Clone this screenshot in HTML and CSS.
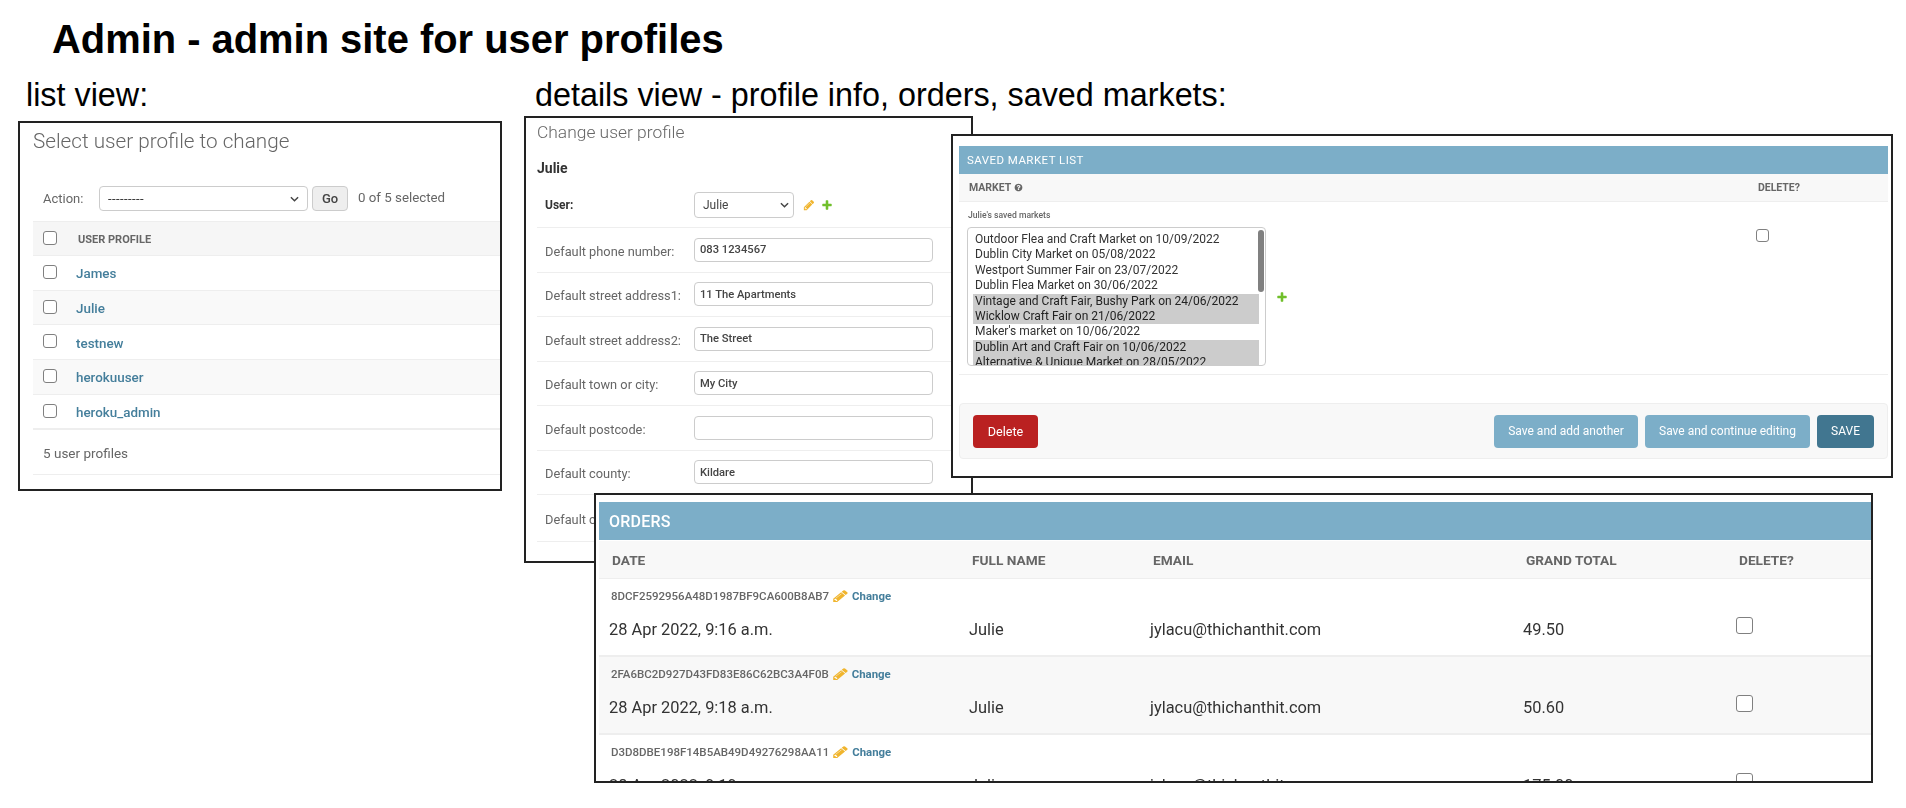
FILE: index.html
```html
<!DOCTYPE html>
<html lang="en">
<head>
    <meta charset="UTF-8">
    <title>Admin - admin site for user profiles</title>
    <link rel="stylesheet" href="styles.css">
</head>

<body>
    <svg class="icon-defs" width="0" height="0">
        <symbol id="pencil" viewBox="0 0 1792 1792" preserveAspectRatio="none"><path d="M491 1536l91-91-235-235-91 91v107h128v128h107zm523-928q0-22-22-22-10 0-17 7l-542 542q-7 7-7 17 0 22 22 22 10 0 17-7l542-542q7-7 7-17zm-54-192l416 416-832 832h-416v-416zm683 96q0 53-37 90l-166 166-416-416 166-165q36-38 90-38 53 0 91 38l235 234q37 39 37 91z"/></symbol>
        <symbol id="plus" viewBox="0 0 1792 1792"><path d="M1600 796v192q0 40-28 68t-68 28h-416v416q0 40-28 68t-68 28h-192q-40 0-68-28t-28-68v-416h-416q-40 0-68-28t-28-68v-192q0-40 28-68t68-28h416v-416q0-40 28-68t68-28h192q40 0 68 28t28 68v416h416q40 0 68 28t28 68z"/></symbol>
        <symbol id="help" viewBox="0 0 1792 1792"><path d="M1024 1376v-192q0-14-9-23t-23-9h-192q-14 0-23 9t-9 23v192q0 14 9 23t23 9h192q14 0 23-9t9-23zm256-672q0-88-55.5-163t-138.5-116-170-41q-243 0-371 213-15 24 8 42l132 100q7 6 19 6 16 0 25-12 53-68 86-92 34-24 86-24 48 0 85.5 26t37.5 59q0 38-20 61t-68 45q-63 28-115.5 86.5t-52.5 125.5v36q0 14 9 23t23 9h192q14 0 23-9t9-23q0-19 21.5-49.5t54.5-49.5q32-18 49-28.5t46-35 44.5-48 28-60.5 12.5-81zm384 192q0 209-103 385.5t-279.5 279.5-385.5 103-385.5-103-279.5-279.5-103-385.5 103-385.5 279.5-279.5 385.5-103 385.5 103 279.5 279.5 103 385.5z"/></symbol>
        <symbol id="chevron" viewBox="0 0 10 6"><path d="M1 1l4 4 4-4" fill="none" stroke="#444" stroke-width="1.6"/></symbol>
    </svg>

    <h1 class="page-title">Admin - admin site for user profiles</h1>
    <p class="caption caption-list">list view:</p>
    <p class="caption caption-details">details view - profile info, orders, saved markets:</p>

    <!-- List view -->
    <section class="shot shot-list">
        <h2 class="list-title">Select user profile to change</h2>
        <div class="actions">
            <label class="actions-label">Action:</label>
            <div class="fake-select action-select">---------<svg class="chevron"><use href="#chevron"/></svg></div>
            <button class="go-button" type="button">Go</button>
            <span class="actions-count">0 of 5 selected</span>
        </div>
        <div class="list-row list-head"><input class="check" type="checkbox"><span class="list-head-text">USER PROFILE</span></div>
        <div class="list-row"><input class="check" type="checkbox"><a class="list-link">James</a></div>
        <div class="list-row list-row-alt"><input class="check" type="checkbox"><a class="list-link">Julie</a></div>
        <div class="list-row"><input class="check" type="checkbox"><a class="list-link">testnew</a></div>
        <div class="list-row list-row-alt"><input class="check" type="checkbox"><a class="list-link">herokuuser</a></div>
        <div class="list-row list-row-last"><input class="check" type="checkbox"><a class="list-link">heroku_admin</a></div>
        <p class="list-count">5 user profiles</p>
    </section>

    <!-- Details view: profile form -->
    <section class="shot shot-form">
        <h2 class="form-title">Change user profile</h2>
        <h3 class="form-name">Julie</h3>
        <div class="form-row form-row-user">
            <label class="form-label form-label-strong">User:</label>
            <div class="fake-select user-select">Julie<svg class="chevron"><use href="#chevron"/></svg></div>
            <svg class="icon-pencil form-pencil"><use href="#pencil"/></svg>
            <svg class="icon-plus"><use href="#plus"/></svg>
        </div>
        <div class="form-row"><label class="form-label">Default phone number:</label><input class="form-input" value="083 1234567"></div>
        <div class="form-row"><label class="form-label">Default street address1:</label><input class="form-input" value="11 The Apartments"></div>
        <div class="form-row"><label class="form-label">Default street address2:</label><input class="form-input" value="The Street"></div>
        <div class="form-row"><label class="form-label">Default town or city:</label><input class="form-input" value="My City"></div>
        <div class="form-row"><label class="form-label">Default postcode:</label><input class="form-input" value=""></div>
        <div class="form-row"><label class="form-label">Default county:</label><input class="form-input" value="Kildare"></div>
        <div class="form-row form-row-last"><label class="form-label">Default country:</label></div>
    </section>

    <!-- Details view: saved markets -->
    <section class="shot shot-markets">
        <h2 class="markets-bar">SAVED MARKET LIST</h2>
        <div class="markets-head">
            <span class="markets-th">MARKET <svg class="icon-help"><use href="#help"/></svg></span>
            <span class="markets-th markets-th-delete">DELETE?</span>
        </div>
        <div class="markets-body">
            <div class="markets-field">
                <p class="markets-help">Julie's saved markets</p>
                <div class="markets-pick">
                    <div class="markets-list">
                        <div class="market">Outdoor Flea and Craft Market on 10/09/2022</div>
                        <div class="market">Dublin City Market on 05/08/2022</div>
                        <div class="market">Westport Summer Fair on 23/07/2022</div>
                        <div class="market">Dublin Flea Market on 30/06/2022</div>
                        <div class="market market-on">Vintage and Craft Fair, Bushy Park on 24/06/2022</div>
                        <div class="market market-on">Wicklow Craft Fair on 21/06/2022</div>
                        <div class="market">Maker's market on 10/06/2022</div>
                        <div class="market market-on">Dublin Art and Craft Fair on 10/06/2022</div>
                        <div class="market market-on">Alternative &amp; Unique Market on 28/05/2022</div>
                        <div class="scroll-thumb"></div>
                    </div>
                    <svg class="icon-plus markets-plus"><use href="#plus"/></svg>
                </div>
            </div>
            <input class="check markets-delete" type="checkbox">
        </div>
        <div class="submit-row">
            <button class="btn btn-delete" type="button">Delete</button>
            <button class="btn btn-another" type="button">Save and add another</button>
            <button class="btn btn-continue" type="button">Save and continue editing</button>
            <button class="btn btn-save" type="button">SAVE</button>
        </div>
    </section>

    <!-- Details view: orders -->
    <section class="shot shot-orders">
        <h2 class="orders-bar">ORDERS</h2>
        <div class="orders-grid orders-head">
            <span>DATE</span><span>FULL NAME</span><span>EMAIL</span><span>GRAND TOTAL</span><span>DELETE?</span>
        </div>
        <div class="order">
            <div class="order-ref">8DCF2592956A48D1987BF9CA600B8AB7 <svg class="icon-pencil order-pencil"><use href="#pencil"/></svg> <a class="order-change">Change</a></div>
            <div class="orders-grid order-cells">
                <span>28 Apr 2022, 9:16 a.m.</span><span>Julie</span><span>jylacu@thichanthit.com</span><span>49.50</span><input class="check order-check" type="checkbox">
            </div>
        </div>
        <div class="order order-alt">
            <div class="order-ref">2FA6BC2D927D43FD83E86C62BC3A4F0B <svg class="icon-pencil order-pencil"><use href="#pencil"/></svg> <a class="order-change">Change</a></div>
            <div class="orders-grid order-cells">
                <span>28 Apr 2022, 9:18 a.m.</span><span>Julie</span><span>jylacu@thichanthit.com</span><span>50.60</span><input class="check order-check" type="checkbox">
            </div>
        </div>
        <div class="order">
            <div class="order-ref">D3D8DBE198F14B5AB49D49276298AA11 <svg class="icon-pencil order-pencil"><use href="#pencil"/></svg> <a class="order-change">Change</a></div>
            <div class="orders-grid order-cells">
                <span>28 Apr 2022, 9:19 a.m.</span><span>Julie</span><span>jylacu@thichanthit.com</span><span>175.00</span><input class="check order-check" type="checkbox">
            </div>
        </div>
    </section>
</body>
</html>
```

FILE: styles.css
```css
/* the page is one slide: captions and screenshots placed freely on a white canvas */
body {
    margin: 0;
    width: 1906px;
    height: 808px;
    position: relative;
    overflow: hidden;
    background: white;
    color: #333;
    font-family: Roboto, sans-serif;
}

.icon-defs {
    position: absolute;
}

.page-title {
    position: absolute;
    left: 52px;
    top: 15px;
    margin: 0;
    font: bold 39.9px/48px "Liberation Sans", sans-serif;
    color: black;
}

.caption {
    position: absolute;
    top: 75px;
    margin: 0;
    font: 32.34px/40px "Liberation Sans", sans-serif;
    color: black;
}

.caption-list {
    left: 26px;
}

.caption-details {
    left: 535px;
}

/* the pasted screenshots are a little soft in the original */
.shot {
    position: absolute;
    box-sizing: border-box;
    border: 2px solid #222;
    background: white;
    overflow: hidden;
    filter: blur(0.3px);
}

.shot-list {
    left: 18px;
    top: 121px;
    width: 484px;
    height: 370px;
    padding-left: 13px;
}

.shot-form {
    left: 524px;
    top: 116px;
    width: 449px;
    height: 447px;
    padding-left: 11px;
}

.shot-markets {
    left: 951px;
    top: 134px;
    width: 942px;
    height: 344px;
    padding: 10px 3px 0 6px;
}

.shot-orders {
    left: 594px;
    top: 493px;
    width: 1279px;
    height: 290px;
    padding: 7px 0 0 3px;
}

/* shared bits */
.check {
    appearance: none;
    box-sizing: border-box;
    width: 14px;
    height: 14px;
    margin: 0;
    background: white;
    border: 1px solid #808080;
    border-radius: 3px;
    flex: none;
}

.fake-select {
    box-sizing: border-box;
    display: flex;
    align-items: center;
    justify-content: space-between;
    border: 1px solid #ccc;
    border-radius: 4px;
    background: white;
    color: #444;
}

.chevron {
    width: 9px;
    height: 6px;
}

.icon-pencil {
    width: 12px;
    height: 12px;
    fill: #f0b52e;
}

.icon-plus {
    width: 12px;
    height: 12px;
    fill: #70bf2b;
}

/* list view */
.list-title {
    margin: 0;
    padding-top: 6px;
    height: 57px;
    box-sizing: border-box;
    font-size: 20.7px;
    line-height: 25px;
    font-weight: 300;
    color: #666;
}

.actions {
    display: flex;
    align-items: center;
    height: 25px;
    margin-top: 6px;
    padding-left: 10px;
    font-size: 13px;
    color: #666;
}

.actions-label {
    width: 56px;
}

.action-select {
    width: 209px;
    height: 25px;
    padding: 0 8px;
    font-size: 13px;
    letter-spacing: 0.4px;
    color: #333;
}

.go-button {
    width: 36px;
    height: 25px;
    margin-left: 4px;
    padding: 0;
    background: #eee;
    border: 1px solid #ccc;
    border-radius: 4px;
    font: 500 13px Roboto, sans-serif;
    color: #444;
}

.actions-count {
    margin-left: 10px;
    position: relative;
    top: -1px;
    font-size: 13.3px;
}

.list-row {
    display: flex;
    align-items: center;
    box-sizing: border-box;
    height: 34.7px;
    padding-left: 10px;
    border-bottom: 1px solid #eee;
}

.list-head {
    height: 35px;
    margin-top: 10px;
    background: #f6f6f6;
    border-top: 1px solid #eee;
}

.list-row-alt {
    background: #f9f9f9;
}

.list-row-last {
    height: 35.5px;
    border-bottom: 2px solid #eee;
}

.list-row .check {
    position: relative;
    top: -1px;
}

.list-head-text {
    margin-left: 21px;
    padding-top: 1px;
    font-size: 11px;
    font-weight: 700;
    color: #666;
}

.list-link {
    margin-left: 19px;
    padding-top: 2px;
    font-size: 13.4px;
    font-weight: 500;
    color: #447e9b;
}

.list-count {
    box-sizing: border-box;
    height: 45px;
    margin: 0;
    padding: 15px 0 0 10px;
    font-size: 13.5px;
    line-height: 16px;
    color: #666;
    border-bottom: 1px solid #eee;
}

/* profile form */
.form-title {
    margin: 0;
    padding-top: 3px;
    font-size: 17.4px;
    line-height: 23px;
    font-weight: 300;
    color: #666;
}

.form-name {
    margin: 0;
    padding-top: 15px;
    height: 42px;
    box-sizing: border-box;
    font-size: 14px;
    line-height: 18px;
    font-weight: 700;
    color: #333;
}

.form-row {
    display: flex;
    align-items: center;
    box-sizing: border-box;
    height: 44.5px;
    padding-left: 8px;
    border-bottom: 1px solid #eee;
}

.form-row-user {
    height: 42px;
    padding-bottom: 4px;
}

.form-row-last {
    height: 47px;
}

.form-label {
    width: 149px;
    padding-top: 3px;
    font-size: 12.8px;
    color: #666;
}

.form-label-strong {
    padding-top: 0;
    font-size: 12px;
    font-weight: 700;
    color: #333;
}

.form-input {
    box-sizing: border-box;
    width: 239px;
    height: 24px;
    padding: 0 5px;
    border: 1px solid #ccc;
    border-radius: 4px;
    font: 500 11.2px Roboto, sans-serif;
    color: #444;
}

.user-select {
    width: 100px;
    height: 26px;
    padding: 0 4px 0 8px;
    font-size: 12px;
}

.form-pencil {
    margin-left: 9px;
}

.form-row .icon-plus {
    margin-left: 6px;
}

/* saved markets */
.markets-bar {
    margin: 0;
    height: 28px;
    padding-left: 8px;
    background: #7caec8;
    color: white;
    font-size: 11.5px;
    line-height: 28px;
    font-weight: 400;
    letter-spacing: 0.45px;
}

.markets-head {
    display: flex;
    justify-content: space-between;
    box-sizing: border-box;
    height: 28px;
    padding: 0 88px 0 10px;
    background: #f8f8f8;
    border-bottom: 1px solid #eee;
}

.markets-th {
    font-size: 10.5px;
    line-height: 27px;
    font-weight: 700;
    color: #666;
}

.icon-help {
    width: 9px;
    height: 9px;
    fill: #666;
    vertical-align: -1px;
}

.markets-body {
    display: flex;
    justify-content: space-between;
    box-sizing: border-box;
    height: 173px;
    padding-right: 119px;
    border-bottom: 1px solid #eee;
}

.markets-help {
    margin: 0;
    padding: 7px 0 0 9px;
    height: 25px;
    box-sizing: border-box;
    font-size: 8.6px;
    line-height: 12px;
    font-weight: 500;
    color: #666;
}

.markets-pick {
    display: flex;
    align-items: center;
    padding-left: 8px;
}

.markets-list {
    position: relative;
    box-sizing: border-box;
    width: 299px;
    height: 139px;
    padding: 4px 6px 0 5px;
    overflow: hidden;
    background: white;
    border: 1px solid #ccc;
    border-radius: 4px;
}

.market {
    height: 15.4px;
    padding-left: 2px;
    font-size: 12px;
    line-height: 15.4px;
    color: #333;
    white-space: nowrap;
}

.market-on {
    background: #ccc;
    color: #222;
}

.scroll-thumb {
    position: absolute;
    left: 290px;
    top: 2px;
    width: 6px;
    height: 62px;
    background: #808080;
    border-radius: 3px;
}

.markets-plus {
    margin-left: 10px;
}

.markets-delete {
    margin-top: 27px;
    width: 13px;
    height: 13px;
}

.submit-row {
    display: flex;
    align-items: center;
    gap: 7px;
    box-sizing: border-box;
    height: 56px;
    margin-top: 28px;
    padding: 0 13px;
    background: #f8f8f8;
    border: 1px solid #eee;
    border-radius: 4px;
}

.btn {
    height: 33px;
    padding: 0;
    border: 0;
    border-radius: 4px;
    color: white;
    font: 400 12px Roboto, sans-serif;
}

.btn-delete {
    width: 65px;
    margin-right: auto;
    background: #ba2121;
    font-size: 12.6px;
}

.btn-another {
    width: 144px;
    background: #7caec8;
}

.btn-continue {
    width: 165px;
    background: #7caec8;
}

.btn-save {
    width: 57px;
    background: #417690;
}

/* orders */
.orders-bar {
    margin: 0;
    height: 38px;
    padding-left: 10px;
    background: #7caec8;
    color: white;
    font-size: 16px;
    line-height: 40px;
    font-weight: 500;
    letter-spacing: 0.2px;
}

.orders-grid {
    display: grid;
    grid-template-columns: 360px 181px 373px 213px 1fr;
    padding-left: 10px;
}

.orders-head {
    box-sizing: border-box;
    height: 38px;
    margin-top: 1px;
    background: #f8f8f8;
    border-bottom: 1px solid #eee;
    font-size: 13.7px;
    line-height: 38px;
    font-weight: 700;
    color: #666;
}

.orders-head span {
    padding-left: 3px;
}

.order {
    box-sizing: border-box;
    height: 78px;
    border-bottom: 2px solid #eee;
}

.order-alt {
    background: #f8f8f8;
}

.order-ref {
    display: flex;
    align-items: center;
    gap: 4px;
    height: 17px;
    padding: 8px 0 0 12px;
    font-size: 11.5px;
    font-weight: 500;
    color: #666;
}

.order-pencil {
    width: 17px;
    height: 14px;
    margin: 0 -1px;
}

.order-change {
    font-size: 11.4px;
    font-weight: 700;
    color: #447e9b;
}

.order-cells {
    align-items: center;
    margin-top: 16px;
    height: 20px;
    font-size: 16.4px;
    line-height: 20px;
    color: #333;
}

.order-check {
    width: 17px;
    height: 17px;
    position: relative;
    top: -5px;
}
```
